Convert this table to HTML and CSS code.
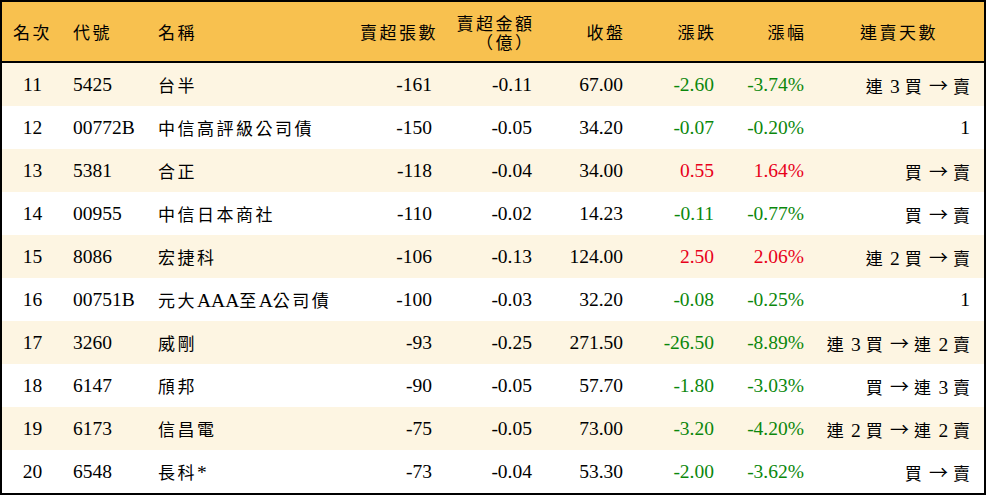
FILE: index.html
```html
<!DOCTYPE html>
<html lang="zh-Hant">
<head>
<meta charset="utf-8">
<title>賣超排行</title>
<link rel="stylesheet" href="styles.css">
</head>
<body>
<table class="rank">
  <colgroup>
    <col class="w-rank"><col class="w-code"><col class="w-name"><col class="w-vol"><col class="w-amt"><col class="w-close"><col class="w-chg"><col class="w-pct"><col class="w-streak">
  </colgroup>
  <thead>
    <tr>
      <th class="c">名次</th>
      <th class="l">代號</th>
      <th class="l">名稱</th>
      <th class="r"><span class="e">賣超張數</span></th>
      <th class="r"><span class="e">賣超金額</span><br><span class="e">（億）</span></th>
      <th class="r"><span class="e">收盤</span></th>
      <th class="r"><span class="e">漲跌</span></th>
      <th class="r"><span class="e">漲幅</span></th>
      <th class="c">連賣天數</th>
    </tr>
  </thead>
  <tbody>
    <tr><td class="c">11</td><td>5425</td><td><span class="zh">台半</span></td><td class="r">-161</td><td class="r">-0.11</td><td class="r">67.00</td><td class="r dn">-2.60</td><td class="r dn">-3.74%</td><td class="r s"><span class="zh">連</span> 3 <span class="zh">買</span> <span class="ar">→</span> <span class="zh e">賣</span></td></tr>
    <tr><td class="c">12</td><td>00772B</td><td><span class="zh">中信高評級公司債</span></td><td class="r">-150</td><td class="r">-0.05</td><td class="r">34.20</td><td class="r dn">-0.07</td><td class="r dn">-0.20%</td><td class="r s">1</td></tr>
    <tr><td class="c">13</td><td>5381</td><td><span class="zh">合正</span></td><td class="r">-118</td><td class="r">-0.04</td><td class="r">34.00</td><td class="r up">0.55</td><td class="r up">1.64%</td><td class="r s"><span class="zh">買</span> <span class="ar">→</span> <span class="zh e">賣</span></td></tr>
    <tr><td class="c">14</td><td>00955</td><td><span class="zh">中信日本商社</span></td><td class="r">-110</td><td class="r">-0.02</td><td class="r">14.23</td><td class="r dn">-0.11</td><td class="r dn">-0.77%</td><td class="r s"><span class="zh">買</span> <span class="ar">→</span> <span class="zh e">賣</span></td></tr>
    <tr><td class="c">15</td><td>8086</td><td><span class="zh">宏捷科</span></td><td class="r">-106</td><td class="r">-0.13</td><td class="r">124.00</td><td class="r up">2.50</td><td class="r up">2.06%</td><td class="r s"><span class="zh">連</span> 2 <span class="zh">買</span> <span class="ar">→</span> <span class="zh e">賣</span></td></tr>
    <tr><td class="c">16</td><td>00751B</td><td><span class="zh">元大</span>AAA<span class="zh">至</span>A<span class="zh">公司債</span></td><td class="r">-100</td><td class="r">-0.03</td><td class="r">32.20</td><td class="r dn">-0.08</td><td class="r dn">-0.25%</td><td class="r s">1</td></tr>
    <tr><td class="c">17</td><td>3260</td><td><span class="zh">威剛</span></td><td class="r">-93</td><td class="r">-0.25</td><td class="r">271.50</td><td class="r dn">-26.50</td><td class="r dn">-8.89%</td><td class="r s"><span class="zh">連</span> 3 <span class="zh">買</span> <span class="ar">→</span> <span class="zh">連</span> 2 <span class="zh e">賣</span></td></tr>
    <tr><td class="c">18</td><td>6147</td><td><span class="zh">頎邦</span></td><td class="r">-90</td><td class="r">-0.05</td><td class="r">57.70</td><td class="r dn">-1.80</td><td class="r dn">-3.03%</td><td class="r s"><span class="zh">買</span> <span class="ar">→</span> <span class="zh">連</span> 3 <span class="zh e">賣</span></td></tr>
    <tr><td class="c">19</td><td>6173</td><td><span class="zh">信昌電</span></td><td class="r">-75</td><td class="r">-0.05</td><td class="r">73.00</td><td class="r dn">-3.20</td><td class="r dn">-4.20%</td><td class="r s"><span class="zh">連</span> 2 <span class="zh">買</span> <span class="ar">→</span> <span class="zh">連</span> 2 <span class="zh e">賣</span></td></tr>
    <tr><td class="c">20</td><td>6548</td><td><span class="zh">長科</span>*</td><td class="r">-73</td><td class="r">-0.04</td><td class="r">53.30</td><td class="r dn">-2.00</td><td class="r dn">-3.62%</td><td class="r s"><span class="zh">買</span> <span class="ar">→</span> <span class="zh e">賣</span></td></tr>
  </tbody>
</table>
</body>
</html>
```

FILE: styles.css
```css
html, body {
  margin: 0;
  padding: 0;
  background: #ffffff;
}

.rank {
  width: 986px;
  border: 2px solid #000;
  border-collapse: separate;
  border-spacing: 0;
  table-layout: fixed;
  font-family: "Liberation Serif", "Noto Sans CJK TC", serif;
  font-size: 19.5px;
  color: #000;
}

.w-rank { width: 61px; }
.w-code { width: 85px; }
.w-name { width: 202px; }
.w-vol { width: 92px; }
.w-amt { width: 100px; }
.w-close { width: 91px; }
.w-chg { width: 91px; }
.w-pct { width: 90px; }
.w-streak { width: 170px; }

.rank th {
  background: #f8c14f;
  height: 59px;
  padding: 0 10px;
  border-bottom: 2px solid #000;
  font-family: "Noto Sans CJK TC", sans-serif;
  font-size: 17px;
  font-weight: normal;
  letter-spacing: 2.5px;
  line-height: 19px;
  white-space: nowrap;
}

.rank td {
  height: 43px;
  padding: 0 10px;
  white-space: nowrap;
  text-align: left;
}

.rank tbody tr:nth-child(odd) td {
  background: #fdf5e2;
}

.rank .c { text-align: center; }
.rank .l { text-align: left; }
.rank .r { text-align: right; }
.rank td.s { padding-right: 14px; }

.zh {
  font-family: "Noto Sans CJK TC", sans-serif;
  font-size: 17px;
  letter-spacing: 2.5px;
}

.ar {
  font-family: "Noto Sans CJK TC", sans-serif;
  font-size: 19px;
}

.e {
  margin-right: -2.5px;
}

.dn { color: #0b870b; }
.up { color: #e8001a; }
```
